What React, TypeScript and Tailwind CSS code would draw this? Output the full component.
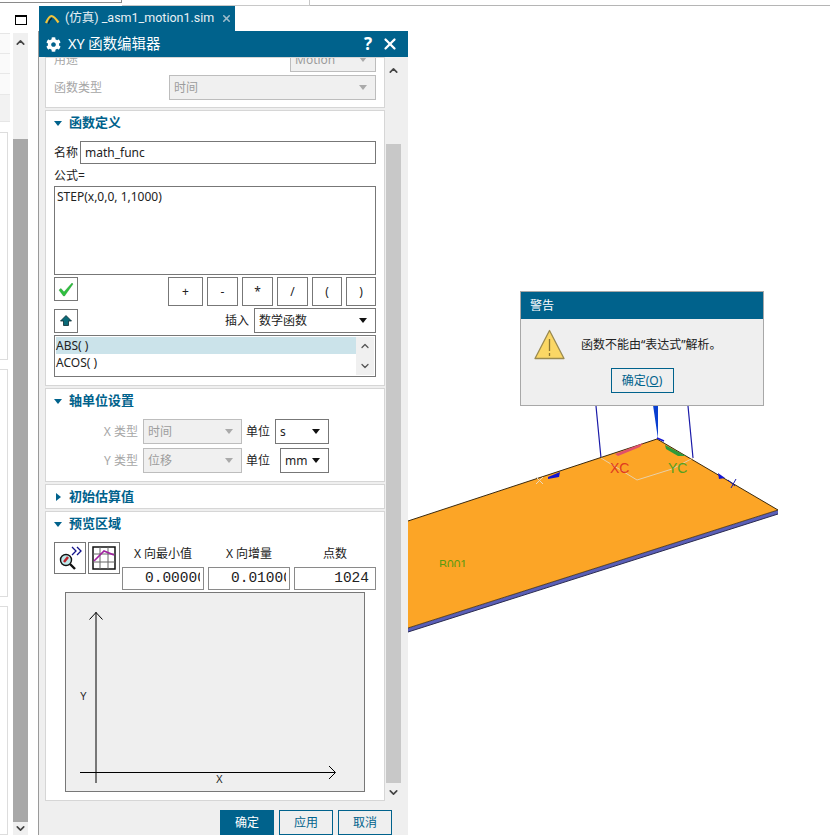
import React from "react";
import { FaCog } from "react-icons/fa";
import { X, ChevronUp, ChevronDown } from "lucide-react";

const UI = "font-['Noto_Sans','Noto_Sans_CJK_SC',sans-serif]";

function Tri({ dim }: { dim?: boolean }) {
  return (
    <svg width="8" height="5" viewBox="0 0 8 5" className="shrink-0">
      <path d="M0 0H8L4 5Z" fill={dim ? "#aaaaaa" : "#111111"} />
    </svg>
  );
}

function Select({ text, w, dim }: { text: string; w: string; dim?: boolean }) {
  return (
    <div
      className={`flex h-[25px] items-center justify-between border pl-[4px] pr-[8px] text-[12px] ${w} ${
        dim
          ? "border-[#bdbdbd] bg-[#f0f0f0] text-[#9c9c9c]"
          : "border-[#777777] bg-white text-[#222222]"
      }`}
    >
      <span className="pt-[1px]">{text}</span>
      <Tri dim={dim} />
    </div>
  );
}

function Heading({ text, open = true }: { text: string; open?: boolean }) {
  return (
    <div className="flex h-[24px] items-center pl-[8px] text-[13px] font-bold text-[#00628c]">
      <span className="flex w-[15px] items-center">
        {open ? (
          <svg width="8" height="5" viewBox="0 0 8 5">
            <path d="M0 0H8L4 5Z" fill="#00628c" />
          </svg>
        ) : (
          <svg width="5" height="8" viewBox="0 0 5 8" className="ml-[2px]">
            <path d="M0 0V8L5 4Z" fill="#00628c" />
          </svg>
        )}
      </span>
      {text}
    </div>
  );
}

function Card({ className, children }: { className: string; children: React.ReactNode }) {
  return <div className={`shrink-0 border border-[#d6d6d6] bg-white ${className}`}>{children}</div>;
}

function Op({ t, w }: { t: string; w: string }) {
  return (
    <div
      className={`flex h-[29px] items-center justify-center border border-[#777777] bg-white text-[12px] text-[#222222] ${w}`}
    >
      {t}
    </div>
  );
}

function Num({ t, right }: { t: string; right?: boolean }) {
  return (
    <div
      className={`h-[23px] border border-[#8a8a8a] bg-white py-[1px] font-['Liberation_Mono',monospace] text-[14.5px] leading-[19px] text-[#222222] ${
        right ? "pl-[6px] pr-[1px]" : "pl-[22px] pr-[3px]"
      }`}
    >
      <div className={`h-full overflow-hidden whitespace-nowrap ${right ? "pr-[5px] text-right" : ""}`}>{t}</div>
    </div>
  );
}

function TypeRow({
  label,
  value,
  unit,
  unitW,
}: {
  label: string;
  value: string;
  unit: string;
  unitW: string;
}) {
  return (
    <div className="flex h-[25px] items-center text-[12px]">
      <span className="w-[97px] pr-[5px] text-right text-[#a6a6a6]">{label}</span>
      <Select text={value} w="w-[99px]" dim />
      <span className="ml-[4px] text-[#222222]">单位</span>
      <div className="flex flex-1 justify-end pr-[55px]">
        <Select text={unit} w={unitW} />
      </div>
    </div>
  );
}

function Scene() {
  return (
    <svg width="422" height="804" viewBox="408 31 422 804" className="block">
      <defs>
        <clipPath id="cut">
          <rect x="430" y="550" width="60" height="17" />
        </clipPath>
      </defs>
      <path d="M596 406L601 458M688 406L693 458" stroke="#1a1aa8" strokeWidth="1.2" fill="none" />
      <path d="M653 405H658L658 439Z" fill="#0a3fd0" />
      <path d="M408 632L778 514V510L408 628Z" fill="#5a5fb8" />
      <path d="M408 521L657 439L778 510L408 628Z" fill="#fca526" />
      <path d="M408 521L657 439L778 510" stroke="#3a2a10" strokeWidth="1" fill="none" />
      <path d="M408 632L778 514" stroke="#2a2a50" strokeWidth="1" fill="none" />
      <path d="M408 628L778 510" stroke="#3a2a10" strokeWidth="0.8" fill="none" />
      <path d="M601 458L637 480L672 469L693 458" stroke="#e8d0a8" strokeWidth="1" fill="none" />
      <path d="M615 454L643 443L640 447L618 456Z" fill="#e0506a" />
      <path d="M665 445L686 456L678 456L666 449Z" fill="#2e9a3a" />
      <path d="M548 477L560 472L559 477L548 479Z" fill="#1414d0" />
      <path d="M718 473L725 478L719 479Z" fill="#1414d0" />
      <path d="M657 438L664 441" stroke="#1414d0" strokeWidth="1.5" />
      <path d="M536 477L543 484M543 477L536 484" stroke="#e8d8c0" strokeWidth="1" />
      <path d="M728 480L735 486M736 479L731 488" stroke="#1a1aa8" strokeWidth="1" />
      <text x="610" y="473" fontSize="14" fill="#e03a20" fontFamily="Liberation Sans, sans-serif">
        XC
      </text>
      <text x="668" y="473" fontSize="14" fill="#55a020" fontFamily="Liberation Sans, sans-serif">
        YC
      </text>
      <text
        x="439"
        y="569"
        fontSize="12"
        fill="#5c9a10"
        clipPath="url(#cut)"
        fontFamily="Liberation Sans, sans-serif"
      >
        B001
      </text>
    </svg>
  );
}

function Plot() {
  return (
    <svg width="300" height="200" viewBox="0 0 300 200" className="block">
      <rect x="0.5" y="0.5" width="299" height="199" fill="#efefef" stroke="#777777" />
      <g stroke="#000000" fill="none" strokeWidth="1">
        <path d="M31 20V191" />
        <path d="M24.5 27.5L31 20.5L37.5 27.5" />
        <path d="M15 180.5H270" />
        <path d="M264 174L270.5 180.5L264 187" />
      </g>
      <text x="15" y="108" fontSize="10" fill="#222" fontFamily="Liberation Sans, sans-serif">
        Y
      </text>
      <text x="151" y="191" fontSize="10" fill="#222" fontFamily="Liberation Sans, sans-serif">
        X
      </text>
    </svg>
  );
}

export default function App() {
  return (
    <div className={`flex h-[835px] w-[830px] flex-col overflow-hidden bg-white ${UI}`}>
      {/* strip above the tabs */}
      <div className="flex h-[6px] shrink-0">
        <div className="h-[3px] w-[122px] border-b border-r border-[#8a8a8a]" />
        <div className="h-[6px] w-[188px] border-b border-r border-[#c8c8c8]" />
        <div className="h-[6px] flex-1 border-b border-[#b5b5b5]" />
      </div>

      <div className="flex min-h-0 flex-1">
        {/* left rail */}
        <div className="flex w-[38px] shrink-0 flex-col">
          <div className="flex h-[27px] shrink-0 items-start pl-[15px] pt-[9px]">
            <div className="h-[10px] w-[12px] border border-t-2 border-black" />
          </div>
          <div className="flex min-h-0 flex-1">
            <div className="flex w-[13px] shrink-0 flex-col">
              <div className="h-[89px] w-[10px] border-y border-[#e6e6e6] bg-[#fafafa]">
                <div className="h-[20px] border-b border-[#e8e8e8]" />
                <div className="h-[20px] border-b border-[#e8e8e8]" />
                <div className="h-[21px] border-b border-[#e8e8e8]" />
                <div className="h-[26px] bg-[#f2f2f2]" />
              </div>
              <div className="mt-[10px] h-[228px] w-[8px] border border-l-0 border-[#dddddd]" />
              <div className="mt-[9px] h-[228px] w-[8px] border border-l-0 border-[#dddddd]" />
              <div className="mt-[9px] h-[229px] w-[8px] border-y border-r border-[#dddddd]" />
            </div>
            <div className="flex w-[15px] shrink-0 flex-col bg-[#f0f0f0]">
              <div className="flex h-[106px] shrink-0 items-start justify-center pt-[3px]">
                <ChevronUp size={13} strokeWidth={3} className="text-[#444444]" />
              </div>
              <div className="h-[683px] shrink-0 bg-[#a8a8a8]" />
              <div className="flex flex-1 items-center justify-center">
                <ChevronDown size={13} strokeWidth={3} className="text-[#444444]" />
              </div>
            </div>
          </div>
        </div>

        {/* tabs + dialog + view */}
        <div className="flex min-w-0 flex-1 flex-col">
          <div className="flex h-[25px] shrink-0 pl-[1px]">
            <div className="flex w-[196px] items-center bg-[#00628c] pl-[5px] font-['Roboto','Noto_Sans_CJK_SC',sans-serif] text-[12.5px] text-[#e8f0f4]">
              <svg width="16" height="12" viewBox="0 0 16 12" className="mr-[5px] shrink-0">
                <path d="M2 10Q5 3 7.5 3Q10 3 14.5 9.5" stroke="#f3c53c" strokeWidth="2.2" fill="none" />
                <path d="M4.5 10.5Q6 6 8 5.5" stroke="#1a1a1a" strokeWidth="1.1" fill="none" />
              </svg>
              <span className="whitespace-nowrap">(仿真) _asm1_motion1.sim</span>
              <X size={11} strokeWidth={3.5} className="ml-[7px] shrink-0 text-[#9dbccb]" />
            </div>
          </div>

          <div className="flex min-h-0 flex-1">
            {/* XY function editor */}
            <div className="flex w-[370px] shrink-0 flex-col border-l border-[#9a9a9a] bg-[#efefef]">
              <div className="flex h-[26px] shrink-0 items-center bg-[#00628c] pl-[7px] pr-[9px] text-white">
                <FaCog size={15} />
                <span className="ml-[7px] text-[14.4px]">XY 函数编辑器</span>
                <span className="ml-auto text-[17px] font-bold">?</span>
                <X size={18} strokeWidth={3} className="ml-[9px]" />
              </div>

              <div className="flex min-h-0 flex-1">
                <div className="ml-[6px] flex h-[744px] w-[340px] shrink-0 flex-col gap-[2px]">
                  {/* clipped top section */}
                  <Card className="flex h-[51px] flex-col justify-end gap-[3px] overflow-hidden pb-[7px] pl-[8px] pr-[8px] text-[12px] text-[#a6a6a6]">
                    <div className="flex h-[25px] shrink-0 items-center">
                      <span className="flex-1">用途</span>
                      <Select text="Motion" w="w-[86px]" dim />
                    </div>
                    <div className="flex h-[25px] shrink-0 items-center">
                      <span className="w-[115px]">函数类型</span>
                      <Select text="时间" w="flex-1" dim />
                    </div>
                  </Card>

                  {/* function definition */}
                  <Card className="h-[276px]">
                    <Heading text="函数定义" />
                    <div className="px-[8px] pt-[6px] text-[12px] text-[#222222]">
                      <div className="flex h-[23px] items-center">
                        <span className="w-[26px]">名称</span>
                        <div className="flex h-full flex-1 items-center border border-[#777777] px-[4px] pt-[1px]">
                          math_func
                        </div>
                      </div>
                      <div className="flex h-[22px] items-center pt-[2px]">公式=</div>
                      <div className="h-[89px] border border-[#777777] px-[2px] pt-[1px]">
                        STEP(x,0,0, 1,1000)
                      </div>
                      <div className="mt-[2px] flex h-[29px] items-start">
                        <div className="flex h-[24px] w-[24px] items-center justify-center border border-[#777777]">
                          <svg width="16" height="15" viewBox="0 0 16 15">
                            <path d="M1 8L3 6.5L6 10L14 1L15 2L6.5 14H5.5Z" fill="#2fc03f" stroke="#1d8a2c" strokeWidth="0.4" />
                          </svg>
                        </div>
                        <div className="ml-auto flex gap-[4px]">
                          <Op t="+" w="w-[35px]" />
                          <Op t="-" w="w-[31px]" />
                          <Op t="*" w="w-[31px]" />
                          <Op t="/" w="w-[31px]" />
                          <Op t="(" w="w-[30px]" />
                          <Op t=")" w="w-[30px]" />
                        </div>
                      </div>
                      <div className="mt-[2px] flex h-[25px] items-center">
                        <div className="flex h-[24px] w-[24px] items-center justify-center border border-[#777777]">
                          <svg width="12" height="11" viewBox="0 0 12 11">
                            <path d="M6 0.5L11.5 6H8.5V10.5H3.5V6H0.5Z" fill="#0a6a78" stroke="#0a2a30" strokeWidth="0.8" />
                          </svg>
                        </div>
                        <span className="ml-auto mr-[5px]">插入</span>
                        <Select text="数学函数" w="w-[122px]" />
                      </div>
                      <div className="mt-[2px] flex h-[42px] border border-[#777777] p-[1px]">
                        <div className="flex-1">
                          <div className="flex h-[17px] items-center bg-[#cbe3ea] pt-[1px]">ABS( )</div>
                          <div className="flex h-[17px] items-center pt-[1px]">ACOS( )</div>
                        </div>
                        <div className="flex w-[18px] flex-col items-center justify-between bg-[#f0f0f0] py-[3px]">
                          <ChevronUp size={12} strokeWidth={2.5} className="text-[#555555]" />
                          <ChevronDown size={12} strokeWidth={2.5} className="text-[#555555]" />
                        </div>
                      </div>
                    </div>
                  </Card>

                  {/* axis units */}
                  <Card className="h-[94px]">
                    <Heading text="轴单位设置" />
                    <div className="flex flex-col gap-[4px] pt-[6px]">
                      <TypeRow label="X 类型" value="时间" unit="s" unitW="w-[54px]" />
                      <TypeRow label="Y 类型" value="位移" unit="mm" unitW="w-[49px]" />
                    </div>
                  </Card>

                  <Card className="h-[25px]">
                    <Heading text="初始估算值" open={false} />
                  </Card>

                  {/* preview */}
                  <Card className="h-[290px]">
                    <Heading text="预览区域" />
                    <div className="flex gap-[2px] pl-[8px] pt-[6px]">
                      <div className="flex h-[32px] w-[32px] shrink-0 items-center justify-center border border-[#777777]">
                        <svg width="28" height="26" viewBox="0 0 28 26">
                          <circle cx="10" cy="15" r="5.5" fill="#bfe8ea" stroke="#111" strokeWidth="1.4" />
                          <path d="M8 17L12 12" stroke="#c0202a" strokeWidth="2.5" />
                          <path d="M14 19L19 24" stroke="#111" strokeWidth="2.4" />
                          <path d="M16 2L20 6L16 10M21 2L25 6L21 10" stroke="#12128a" strokeWidth="1.3" fill="none" />
                        </svg>
                      </div>
                      <div className="flex h-[32px] w-[32px] shrink-0 items-center justify-center border border-[#777777]">
                        <svg width="24" height="24" viewBox="0 0 24 24">
                          <rect x="1" y="1" width="22" height="22" fill="#fff" stroke="#111" strokeWidth="1.5" />
                          <path d="M8 1V23M16 1V23M1 8H23M1 16H23" stroke="#666" strokeWidth="1" />
                          <path d="M2 15L12 5L22 9" stroke="#a020a0" strokeWidth="1.6" fill="none" />
                        </svg>
                      </div>
                      <div className="grid w-[254px] grid-cols-3 gap-x-[4px] text-[12px] text-[#222222]">
                        <div className="flex h-[25px] items-center justify-center pb-[2px]">X 向最小值</div>
                        <div className="flex h-[25px] items-center justify-center pb-[2px]">X 向增量</div>
                        <div className="flex h-[25px] items-center justify-center pb-[2px]">点数</div>
                        <Num t="0.000000" />
                        <Num t="0.010000" />
                        <Num t="1024" right />
                      </div>
                    </div>
                    <div className="ml-[19px] mt-[2px]">
                      <Plot />
                    </div>
                  </Card>
                </div>

                {/* scroll bar */}
                <div className="ml-[1px] flex h-[744px] w-[15px] shrink-0 flex-col">
                  <div className="flex h-[87px] shrink-0 items-start justify-center pt-[7px]">
                    <ChevronUp size={13} strokeWidth={3} className="text-[#444444]" />
                  </div>
                  <div className="h-[639px] shrink-0 bg-[#c8c8c8]" />
                  <div className="flex flex-1 items-center justify-center">
                    <ChevronDown size={13} strokeWidth={3} className="text-[#444444]" />
                  </div>
                </div>
              </div>

              <div className="flex h-[34px] shrink-0 items-end justify-end gap-[5px] pr-[16px] text-[12px]">
                <div className="flex h-[25px] w-[54px] items-center justify-center bg-[#00628c] text-white">确定</div>
                <div className="flex h-[25px] w-[54px] items-center justify-center border border-[#00628c] text-[#00628c]">应用</div>
                <div className="flex h-[25px] w-[54px] items-center justify-center border border-[#00628c] text-[#00628c]">取消</div>
              </div>
            </div>

            {/* graphics view */}
            <div className="min-w-0 flex-1">
              <Scene />
            </div>
          </div>
        </div>
      </div>

      {/* warning dialog over the view */}
      <div className="absolute left-[520px] top-[291px] h-[115px] w-[244px] border border-[#a8a8a8] bg-[#efefef]">
        <div className="flex h-[27px] items-center bg-[#00628c] pl-[9px] text-[12px] text-white">警告</div>
        <div className="flex items-center pl-[13px] pt-[10px]">
          <svg width="31" height="31" viewBox="0 0 31 31">
            <path d="M15.5 1.5L30 29.5H1Z" fill="#fbd765" stroke="#9a8a50" strokeWidth="1.3" strokeLinejoin="round" />
            <path d="M15.5 10V22M15.5 24V27" stroke="#8a7430" strokeWidth="1.3" />
          </svg>
          <span className="ml-[16px] text-[12px] text-[#222222]">函数不能由“表达式”解析。</span>
        </div>
        <div className="mx-auto mt-[8px] flex h-[25px] w-[63px] items-center justify-center border border-[#00628c] text-[12px] text-[#00628c]">
          <span>
            确定(<span className="underline">O</span>)
          </span>
        </div>
      </div>
    </div>
  );
}
